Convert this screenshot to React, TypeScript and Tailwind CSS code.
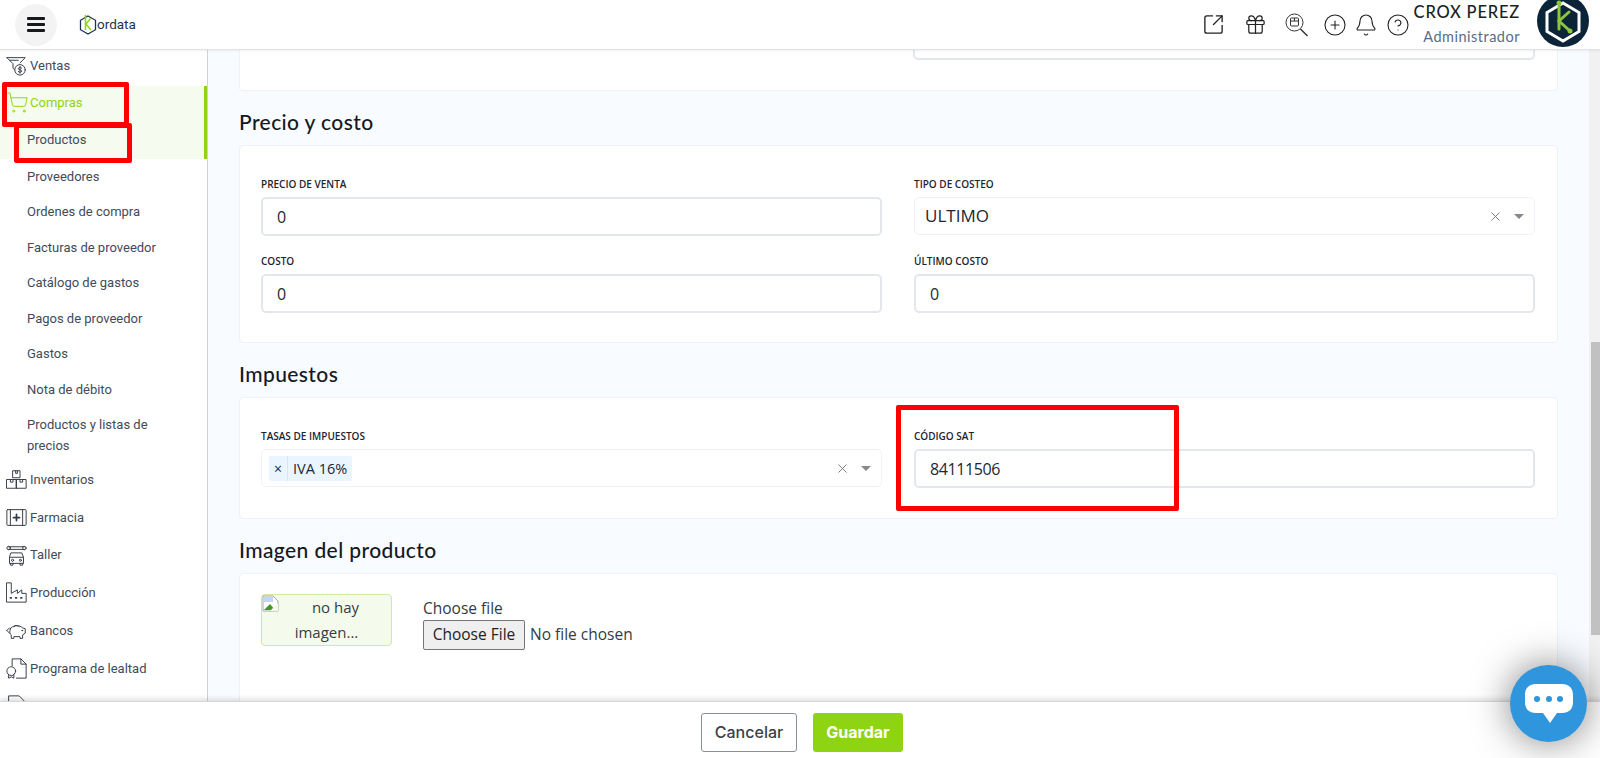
import React from 'react';
import { SquareArrowOutUpRight, Gift, CirclePlus, Bell, CircleHelp, ShoppingCart, X } from 'lucide-react';

const iconProps = {
  width: 21,
  height: 21,
  viewBox: '0 0 24 24',
  fill: 'none',
  stroke: '#343b45',
  strokeWidth: 1.1,
  strokeLinejoin: 'round' as const,
  strokeLinecap: 'round' as const,
  className: 'shrink-0',
};

const VentasIcon = () => (
  <svg {...iconProps}>
    <path d="M1 3h21l-6 6" />
    <path d="M1 3l7 7v5l2 2" />
    <path d="M4 6h10" />
    <circle cx="16" cy="17" r="6" />
    <path d="M18 15c-1-1-4-1-4 .6 0 1.800 4 1 4 2.800 0 1.600-3 1.600-4 .6M16 13v8" />
  </svg>
);

const InventariosIcon = () => (
  <svg {...iconProps}>
    <path d="M8 2h8v8H8zM1 12h11v10H1zM12 12h11v10H12z" />
    <path d="M11 2v3h2V2M5 12v3h3v-3M16 12v3h3v-3" />
  </svg>
);

const FarmaciaIcon = () => (
  <svg {...iconProps}>
    <rect x="1" y="3" width="22" height="18" rx="1" />
    <path d="M5 3v18M19 3v18" />
    <path d="M12 8.500v7M8.500 12h7" strokeWidth="2" />
  </svg>
);

const TallerIcon = () => (
  <svg {...iconProps}>
    <path d="M3 2h18M3 5h18" />
    <circle cx="3" cy="3.500" r="2" />
    <circle cx="21" cy="3.500" r="2" />
    <path d="M6 9h12l2 5v7H4v-7z" />
    <path d="M4 14h16M5 21v2h3v-2M16 21v2h3v-2" />
    <circle cx="7.500" cy="17.500" r="1.200" />
    <circle cx="16.500" cy="17.500" r="1.200" />
  </svg>
);

const ProduccionIcon = () => (
  <svg {...iconProps}>
    <path d="M1 1h5v12l7-4v4l5-4v4h5v10H1z" />
    <path d="M5 18h1M11 18h1M17 18h1" strokeWidth="2" />
  </svg>
);

const BancosIcon = () => (
  <svg {...iconProps}>
    <path d="M5 10c2-4 10-5 14-1l3 1v5l-3 2v4h-3v-2H9v2H6v-4c-2-1-2-4-1-7z" />
    <path d="M9 7.500a4 4 0 0 1 6 0M1 12l3-3M1 12l3 3" />
    <circle cx="18.500" cy="12" r=".5" />
  </svg>
);

const LealtadIcon = () => (
  <svg {...iconProps}>
    <path d="M7 9V1h10l6 6v16H12" />
    <path d="M17 1v6h6" />
    <circle cx="6" cy="15" r="5" />
    <path d="M3 19v4l3-1.500L9 23v-4" />
  </svg>
);

const DocIcon = () => (
  <svg {...iconProps}>
    <path d="M3 23V1h12l6 6v16z" />
  </svg>
);

// Magnifier with a small box inside, not available in lucide
const SearchBoxIcon = () => (
  <svg width="24" height="24" viewBox="0 0 24 24" fill="none" stroke="#333" strokeWidth="1" className="shrink-0">
    <circle cx="9.500" cy="9.500" r="8.500" />
    <path d="M15.500 16l7 7" strokeWidth="1.400" />
    <rect x="5.500" y="5" width="8" height="8" rx="1" />
    <path d="M5.500 8h8M9.500 5v3" />
  </svg>
);

const KordataLogo = () => (
  <svg width="18" height="20" viewBox="0 0 18 20" fill="none" className="shrink-0">
    <path d="M9 1l7.500 4.300v9.400L9 19l-7.500-4.300V5.300z" stroke="#1f3350" strokeWidth="1.300" />
    <path d="M6.500 0v15" stroke="#8fd412" strokeWidth="1.600" />
    <path d="M11.500 3.500L7 9l5 6" stroke="#8fd412" strokeWidth="1.500" />
  </svg>
);

const Avatar = () => (
  <svg width="52" height="52" viewBox="0 0 52 52" className="-mt-[7px] shrink-0">
    <circle cx="26" cy="26" r="26" fill="#0c2438" />
    <path d="M26 8l16 9.500v19L26 46 10 36.500v-19z" fill="none" stroke="#fff" strokeWidth="3" />
    <path d="M22 8v26" stroke="#8cc63f" strokeWidth="3" strokeLinecap="round" />
    <path d="M32 17L22 26l11 10" fill="none" stroke="#8cc63f" strokeWidth="3" strokeLinecap="round" />
    <circle cx="22" cy="8" r="2.500" fill="#8cc63f" />
    <circle cx="33" cy="36" r="2.500" fill="#8cc63f" />
  </svg>
);

const BrokenImage = () => (
  <svg width="17" height="17" viewBox="0 0 17 17" className="absolute left-0 top-0">
    <path d="M1 1h10l5 5v10H1z" fill="#fff" stroke="#a8a8a8" />
    <path d="M2 2h9v5H2z" fill="#c4d5f5" />
    <path d="M2 15l6-6 5 6z" fill="#3f9a25" />
    <path d="M9 15l7-7v8H9z" fill="#f5fbec" />
  </svg>
);

const subItems = ['Proveedores', 'Ordenes de compra', 'Facturas de proveedor', 'Catálogo de gastos', 'Pagos de proveedor', 'Gastos', 'Nota de débito'];

const lowerItems = [
  { label: 'Inventarios', icon: <InventariosIcon /> },
  { label: 'Farmacia', icon: <FarmaciaIcon /> },
  { label: 'Taller', icon: <TallerIcon /> },
  { label: 'Producción', icon: <ProduccionIcon /> },
  { label: 'Bancos', icon: <BancosIcon /> },
  { label: 'Programa de lealtad', icon: <LealtadIcon /> },
];

const Sidebar = () => (
  <aside className="w-[208px] shrink-0 overflow-hidden border-r border-[#cfd3d8] bg-white font-['Roboto',sans-serif] text-[13px] text-[#414b5a]">
    <div className="flex h-[36px] items-center gap-[3px] pb-[5px] pl-[6px]">
      <VentasIcon />
      <span>Ventas</span>
    </div>
    <div className="border-r-[3px] border-[#8fd412] bg-[#f6fbef]">
      <div className="flex h-[36px] items-center gap-[1px] pb-[3px] pl-[6px] text-[#8fd412]">
        <ShoppingCart size={23} strokeWidth={1} className="shrink-0" />
        <span>Compras</span>
      </div>
      <div className="flex h-[37px] items-center pb-[1px] pl-[27px]">Productos</div>
    </div>
    {subItems.map((item) => (
      <div key={item} className="flex h-[35.5px] items-center pb-[1px] pl-[27px]">{item}</div>
    ))}
    <div className="h-[53.5px] pl-[27px] pr-[30px] pt-[6px] leading-[21px]">Productos y listas de precios</div>
    {lowerItems.map((item) => (
      <div key={item.label} className="flex h-[37.7px] items-center gap-[3px] pl-[6px]">
        {item.icon}
        <span>{item.label}</span>
      </div>
    ))}
    <div className="flex h-[37.7px] items-center pl-[6px]">
      <DocIcon />
    </div>
  </aside>
);

const Field = ({ label, value }: { label: string; value: string }) => (
  <div>
    <label className="mb-[6px] block font-['Open_Sans',sans-serif] text-[10px] font-semibold leading-[14px] text-[#1c2530]">{label}</label>
    <div className="flex h-[39px] items-center rounded-[5px] border-2 border-[#e3e6ec] bg-white px-[14px] font-['Open_Sans',sans-serif] text-[16px] tracking-[-0.4px] text-[#1d2733]">{value}</div>
  </div>
);

const SelectField = ({ label, children }: { label: string; children: React.ReactNode }) => (
  <div>
    <label className="mb-[6px] block font-['Open_Sans',sans-serif] text-[10px] font-semibold leading-[14px] text-[#1c2530]">{label}</label>
    <div className="flex h-[38px] items-center rounded-[5px] border border-[#edf2f9] bg-white pl-[10px] pr-[10px] font-['Open_Sans',sans-serif] text-[17px] text-[#1d2733]">
      <div className="flex-1">{children}</div>
      <X size={15} strokeWidth={1.500} className="mr-[11px] text-[#777]" />
      <span className="h-0 w-0 border-x-[5px] border-t-[5px] border-x-transparent border-t-[#888]" />
    </div>
  </div>
);

const Heading = ({ children }: { children: React.ReactNode }) => (
  <h2 className="mb-[7px] mt-[17px] h-[30px] font-['Lato',sans-serif] text-[21px] font-medium leading-[27px] tracking-[0.4px] text-[#14191f]">{children}</h2>
);

const Card = ({ children }: { children: React.ReactNode }) => (
  <section className="rounded-[4px] border border-[#edf2f8] bg-white pl-[21px] pr-[22px]">{children}</section>
);

const Content = () => (
  <div className="min-w-0 flex-1 overflow-hidden bg-[#f8fbff] px-[31px]">
    <div className="h-[41px] rounded-b-[4px] border-x border-b border-[#edf2f8] bg-white pl-[21px] pr-[22px]">
      <div className="ml-[652px] h-[10px] rounded-b-[5px] border-x-2 border-b-2 border-[#e3e6ec]" />
    </div>

    <Heading>Precio y costo</Heading>
    <Card>
      <div className="grid grid-cols-2 gap-x-[32px] gap-y-[18px] pb-[29px] pt-[31px]">
        <Field label="PRECIO DE VENTA" value="0" />
        <SelectField label="TIPO DE COSTEO">ULTIMO</SelectField>
        <Field label="COSTO" value="0" />
        <Field label="ÚLTIMO COSTO" value="0" />
      </div>
    </Card>

    <Heading>Impuestos</Heading>
    <Card>
      <div className="grid grid-cols-2 gap-x-[32px] pb-[30px] pt-[31px]">
        <SelectField label="TASAS DE IMPUESTOS">
          <span className="-ml-[3px] inline-flex h-[25px] items-center rounded-[2px] bg-[#ebf5ff] text-[14.500px]">
            <span className="flex h-full items-center border-r border-[#d3e6fa] px-[5px] text-[14px]">×</span>
            <span className="px-[5px]">IVA 16%</span>
          </span>
        </SelectField>
        <Field label="CÓDIGO SAT" value="84111506" />
      </div>
    </Card>

    <Heading>Imagen del producto</Heading>
    <section className="h-[200px] rounded-[4px] border border-[#edf2f8] bg-white pl-[21px] pt-[20px]">
      <div className="flex gap-[31px]">
        <div className="relative h-[52px] w-[131px] shrink-0 rounded-[4px] border border-[#cdeaa2] bg-[#f5fbec] text-center font-['Open_Sans',sans-serif] text-[15px] leading-[25px] text-[#333b45]">
          <BrokenImage />
          <span className="block pl-[18px]">no hay</span>
          <span className="block">imagen...</span>
        </div>
        <div className="pt-[2px] font-['Open_Sans',sans-serif] text-[15.500px] text-[#333b45]">
          <div className="h-[24px] leading-[24px]">Choose file</div>
          <div className="flex items-center gap-[5px]">
            <span className="flex h-[30px] w-[102px] items-center justify-center rounded-[2px] border border-[#767676] bg-[#efefef] text-[#222]">Choose File</span>
            <span>No file chosen</span>
          </div>
        </div>
      </div>
    </section>
  </div>
);

export default function App() {
  return (
    <div className="relative flex h-[758px] w-full flex-col overflow-hidden bg-white">
      <header className="z-10 flex h-[50px] shrink-0 items-center overflow-hidden border-b border-[#dfe1e4] bg-white pl-[15px] shadow-[0_1px_2px_rgba(0,0,0,0.06)]">
        <button className="flex h-[42px] w-[42px] items-center justify-center rounded-full bg-[#f3f3f3]">
          <svg width="20" height="17" viewBox="0 0 20 17" fill="#16181c">
            <rect x="1" y="1" width="18" height="3" rx="1" />
            <rect x="1" y="7" width="18" height="3" rx="1" />
            <rect x="1" y="13" width="18" height="3" rx="1" />
          </svg>
        </button>
        <div className="ml-[22px] flex items-center">
          <KordataLogo />
          <span className="font-['Roboto',sans-serif] text-[13.500px] text-[#1f3350]">ordata</span>
        </div>
        <div className="ml-auto flex items-center text-[#222]">
          <SquareArrowOutUpRight size={23} strokeWidth={1.400} />
          <Gift size={23} strokeWidth={1.300} className="ml-[19px]" />
          <span className="ml-[18px]"><SearchBoxIcon /></span>
          <CirclePlus size={24} strokeWidth={1.100} className="ml-[14px]" />
          <Bell size={24} strokeWidth={1.100} className="ml-[7px]" />
          <CircleHelp size={24} strokeWidth={1.100} className="ml-[8px]" />
          <div className="ml-[4px] mr-[17px] -mt-[1px] text-right font-['Lato',sans-serif]">
            <div className="text-[16.500px] font-medium leading-[22px] tracking-[0.8px] text-[#1a1f26]">CROX PEREZ</div>
            <div className="mt-[3px] text-[14.500px] leading-[22px] tracking-[0.5px] text-[#5b6b85]">Administrador</div>
          </div>
          <Avatar />
          <span className="w-[11px]" />
        </div>
      </header>

      <main className="flex min-h-0 flex-1">
        <Sidebar />
        <Content />
        <div className="flex w-[11px] shrink-0 flex-col bg-[#f1f1f1] pl-[2px] pt-[292px]">
          <div className="h-[293px] bg-[#c1c1c1]" />
        </div>
      </main>

      <footer className="z-10 flex h-[57px] shrink-0 items-center justify-center gap-[16px] border-t border-[#d8d8d8] bg-white pl-[4px] pt-[4px] shadow-[0_-2px_5px_rgba(0,0,0,0.14)]">
        <button className="h-[39px] w-[96px] rounded-[3px] border border-[#8a9099] bg-white font-['Inter',sans-serif] text-[16px] font-medium text-[#3a4149]">Cancelar</button>
        <button className="h-[39px] w-[90px] rounded-[3px] bg-[#8fd412] font-['Inter',sans-serif] text-[16px] font-bold text-white">Guardar</button>
      </footer>

      {/* annotations drawn over the capture */}
      <div className="absolute left-[2px] top-[82px] z-20 h-[45px] w-[127px] rounded-[2px] border-[5px] border-[#ff0000]" />
      <div className="absolute left-[14px] top-[123px] z-20 h-[40px] w-[118px] rounded-[2px] border-[5px] border-[#ff0000]" />
      <div className="absolute left-[896px] top-[405px] z-20 h-[106px] w-[283px] rounded-[2px] border-[5px] border-[#ff0000]" />

      <button className="absolute left-[1510px] top-[665px] z-30 flex h-[77px] w-[77px] items-center justify-center rounded-full bg-[#2f96dd] shadow-[0_0_38px_rgba(0,0,0,0.5)]">
        <svg width="50" height="42" viewBox="0 0 50 42">
          <path d="M12 1h26c7 0 11 4 11 11v7c0 7-4 11-11 11H33l-7 10-7-10h-7C5 30 1 26 1 19v-7C1 5 5 1 12 1z" fill="#fff" />
          <circle cx="13" cy="16" r="3" fill="#2f96dd" />
          <circle cx="25" cy="16" r="3" fill="#2f96dd" />
          <circle cx="36" cy="16" r="3" fill="#2f96dd" />
        </svg>
      </button>
    </div>
  );
}
